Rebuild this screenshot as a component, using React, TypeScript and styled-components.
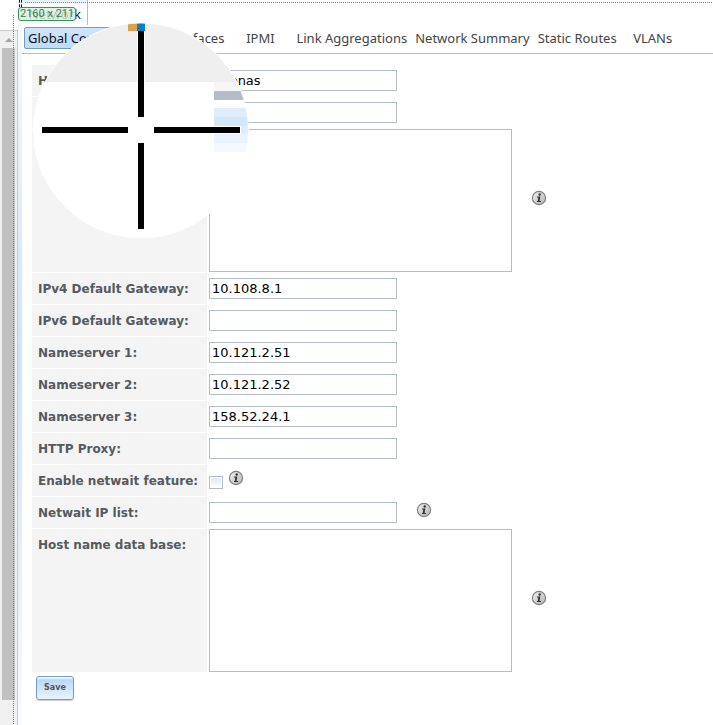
import React from "react";
import styled, { createGlobalStyle } from "styled-components";

const line = "#b5bcc7";

const GlobalStyle = createGlobalStyle`
  * { box-sizing: border-box; }
  body {
    margin: 0;
    background: #fff;
    color: #444;
    font: 13px/18px "DejaVu Sans", Verdana, sans-serif;
    overflow-x: hidden;
  }
  button, input, textarea { font: inherit; color: inherit; }
`;

const Page = styled.div`
  position: relative;
  display: flex;
  min-height: 100vh;
  overflow: hidden;
`;

const Scrollbar = styled.aside`
  flex: none;
  width: 18px;
  margin-top: 30px;
  display: flex;
  flex-direction: column;
  align-items: center;
  padding: 7px 2px 25px 2px;
  background: #f0f0f0;
  border-right: 1px solid #c9c9c9;
  border-top: 1px solid #c9c9c9;
`;

const UpArrow = styled.svg`
  flex: none;
  width: 8px;
  height: 4px;
  margin-bottom: 6px;
`;

const Thumb = styled.div`
  flex: 1;
  align-self: stretch;
  background: #c1c1c1;
`;

const Splitter = styled.div`
  flex: none;
  width: 4px;
  background: linear-gradient(#f7fbff, #cfe3f9 50%, #f7fbff);
`;

const Main = styled.main`
  flex: 1;
  min-width: 0;
`;

const TopTab = styled.button`
  display: block;
  width: 66px;
  height: 25px;
  padding: 3px 6px 0 0;
  border: 0;
  border-right: 1px solid ${line};
  background: linear-gradient(#e4effc, #fff 6px);
  color: #222;
  font-family: "Noto Sans", sans-serif;
  text-align: right;
`;

const Tabs = styled.nav`
  display: flex;
  height: 29px;
  padding: 2px 0 0 2px;
  border-bottom: 1px solid ${line};
`;

const Tab = styled.button<{ $active?: boolean }>`
  flex: none;
  min-width: 64px;
  height: 22px;
  padding: 0 3px;
  border: 1px solid ${(p) => (p.$active ? "#759dc0" : "transparent")};
  border-radius: 2px;
  background: ${(p) => (p.$active ? "linear-gradient(#cfe5fc, #bfdcf9)" : "none")};
  color: ${(p) => (p.$active ? "#111" : "#444")};
  font-family: "Noto Sans", sans-serif;
  line-height: 20px;
  white-space: nowrap;
`;

const Form = styled.form`
  padding: 11px 10px;
`;

const Row = styled.div`
  display: grid;
  grid-template-columns: 175px 1fr;
  column-gap: 2px;
  min-height: 32px;
`;

const Label = styled.label`
  margin-bottom: 1px;
  padding: 7px 6px 0;
  background: #f4f4f4;
  color: #555a60;
  font-size: 12px;
  font-weight: bold;
  white-space: nowrap;
`;

const Field = styled.div<{ $gap?: number }>`
  display: flex;
  align-items: center;
  gap: ${(p) => p.$gap ?? 19}px;
  padding-bottom: 1px;
`;

const TextBox = styled.input`
  width: 188px;
  height: 21px;
  padding: 0 2px;
  border: 1px solid ${line};
  border-radius: 0;
  background: #fff;
  color: #000;
  outline: none;
`;

const Area = styled.textarea`
  display: block;
  width: 303px;
  height: 143px;
  border: 1px solid ${line};
  border-radius: 0;
  background: #fff;
  resize: none;
  outline: none;
`;

const Check = styled.input`
  appearance: none;
  width: 14px;
  height: 13px;
  margin: 4px 0 0;
  border: 1px solid ${line};
  background: linear-gradient(#d9e8f6, #fff);
  box-shadow: inset 0 0 0 1px #fff;
`;

const InfoIcon = styled.svg`
  flex: none;
  width: 16px;
  height: 16px;
  margin-bottom: 6px;
`;

const Save = styled.button`
  display: block;
  height: 24px;
  margin: 3px 0 0 4px;
  padding: 0 7px 1px;
  border: 1px solid #759dc0;
  border-radius: 3px;
  background: linear-gradient(#fff, #bcd8f4 3px, #eaf4fe);
  box-shadow: 0 1px 1px rgba(0, 0, 0, 0.2);
  color: #555;
  font-size: 8px;
  font-weight: bold;
`;

const GuideX = styled.div`
  position: absolute;
  top: 2px;
  left: 25px;
  right: 0;
  height: 1px;
  background: repeating-linear-gradient(90deg, #2aa39b 0 1px, transparent 1px 2px);
`;

const GuideY = styled.div`
  position: absolute;
  top: 15px;
  left: 13px;
  bottom: 0;
  width: 1px;
  background: repeating-linear-gradient(#2aa39b 0 1px, transparent 1px 2px);
`;

const Corner = styled.div`
  position: absolute;
  top: 0;
  left: 19px;
  width: 3px;
  height: 7px;
  border: dashed #111;
  border-width: 0 1px;
`;

const SizeBadge = styled.output`
  position: absolute;
  top: 7px;
  left: 18px;
  height: 14px;
  padding: 0 1px;
  border: 1px solid #36935f;
  border-radius: 3px;
  background: rgba(215, 240, 222, 0.8);
  color: #348055;
  font: 11px/12px Roboto, sans-serif;
  white-space: nowrap;
`;

const Magnifier = styled.svg`
  position: absolute;
  top: 22px;
  left: 32px;
  width: 218px;
  height: 218px;
  pointer-events: none;
`;

function Info() {
  return (
    <InfoIcon viewBox="0 0 16 16" role="img" aria-label="Help">
      <defs>
        <linearGradient id="metal" x1="0" y1="0" x2="1" y2="1">
          <stop offset="0" stopColor="#f4f4f4" />
          <stop offset="0.5" stopColor="#d2d2d2" />
          <stop offset="1" stopColor="#b4b4b4" />
        </linearGradient>
      </defs>
      <circle cx="8" cy="8" r="6.6" fill="url(#metal)" stroke="#7d7d7d" strokeWidth="1.1" />
      <circle cx="8.7" cy="4.5" r="1.2" fill="#333" />
      <path d="M6 6.6H9.3L8.6 11H10V12H6V11H6.8L7.3 7.5H6Z" fill="#333" />
    </InfoIcon>
  );
}

function Lens() {
  return (
    <Magnifier viewBox="32 22 218 218" aria-hidden="true">
      <defs>
        <clipPath id="lens"><circle cx="141" cy="130.5" r="107.5" /></clipPath>
      </defs>
      <g clipPath="url(#lens)" shapeRendering="crispEdges">
        <path d="M32 22H250V240H32Z" fill="#fff" />
        <path d="M32 22H250V82H32Z" fill="#efefef" />
        <path d="M214 82H250V91H214Z" fill="#f6f6f6" />
        <path d="M214 91H250V100H214Z" fill="#b5bcc7" />
        <path d="M214 108H250V117H214Z" fill="#dfecfb" />
        <path d="M214 117H250V126H214Z" fill="#d4e6f8" />
        <path d="M214 126H250V134H214Z" fill="#dfecfb" />
        <path d="M214 134H250V143H214Z" fill="#e9f2fd" />
        <path d="M214 143H250V152H214Z" fill="#f5f9fe" />
        <path d="M128 22H137V31H128Z" fill="#dda050" />
        <path d="M137 22H145V31H137Z" fill="#0b7fc0" />
        <path d="M137 31H145V117H137ZM153 126H241V134H153Z" fill="#fff" />
        <path d="M138 31H144V117H138ZM138 143H144V229H138ZM42 127H128V133H42ZM154 127H240V133H154Z" fill="#000" />
      </g>
      <circle cx="141" cy="130.5" r="107.5" fill="none" stroke="#fff" strokeOpacity="0.8" />
    </Magnifier>
  );
}

const tabs = [
  "Global Configuration", "Interfaces", "IPMI", "Link Aggregations",
  "Network Summary", "Static Routes", "VLANs",
];

type Item = { id: string; label: string; kind?: "area" | "check"; value?: string; info?: boolean };

const fields: Item[] = [
  { id: "hostname", label: "Hostname:", value: "freenas" },
  { id: "domain", label: "Domain:" },
  { id: "domains", label: "Additional domains:", kind: "area", info: true },
  { id: "gw4", label: "IPv4 Default Gateway:", value: "10.108.8.1" },
  { id: "gw6", label: "IPv6 Default Gateway:" },
  { id: "ns1", label: "Nameserver 1:", value: "10.121.2.51" },
  { id: "ns2", label: "Nameserver 2:", value: "10.121.2.52" },
  { id: "ns3", label: "Nameserver 3:", value: "158.52.24.1" },
  { id: "proxy", label: "HTTP Proxy:" },
  { id: "netwait", label: "Enable netwait feature:", kind: "check", info: true },
  { id: "netwaitip", label: "Netwait IP list:", info: true },
  { id: "hosts", label: "Host name data base:", kind: "area", info: true },
];

export default function App() {
  return (
    <Page>
      <GlobalStyle />
      <Scrollbar>
        <UpArrow viewBox="0 0 8 4"><path d="M4 0L8 4H0Z" fill="#a3a3a3" /></UpArrow>
        <Thumb />
      </Scrollbar>
      <Splitter />
      <Main>
        <TopTab type="button">Network</TopTab>
        <Tabs>
          {tabs.map((name, i) => (
            <Tab key={name} type="button" $active={i === 0}>{name}</Tab>
          ))}
        </Tabs>
        <Form onSubmit={(e) => e.preventDefault()}>
          {fields.map((f) => (
            <Row key={f.id}>
              <Label htmlFor={f.id}>{f.label}</Label>
              <Field $gap={f.kind === "check" ? 5 : 19}>
                {f.kind === "area" ? (
                  <Area id={f.id} />
                ) : f.kind === "check" ? (
                  <Check id={f.id} type="checkbox" />
                ) : (
                  <TextBox id={f.id} type="text" defaultValue={f.value} />
                )}
                {f.info && <Info />}
              </Field>
            </Row>
          ))}
          <Save type="submit">Save</Save>
        </Form>
      </Main>
      <GuideX />
      <GuideY />
      <Corner />
      <SizeBadge>2160 x 211</SizeBadge>
      <Lens />
    </Page>
  );
}
